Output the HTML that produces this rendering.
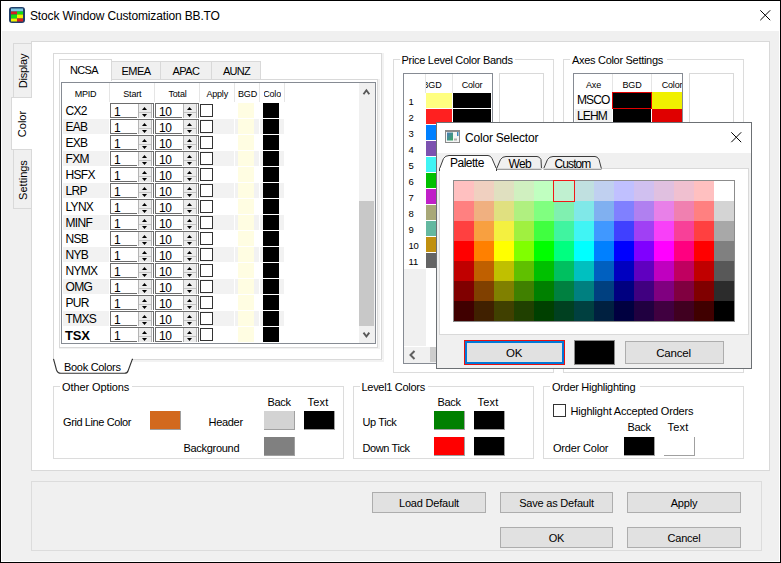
<!DOCTYPE html><html><head><meta charset="utf-8"><title>Stock Window Customization</title><style>
*{margin:0;padding:0;box-sizing:border-box}
html,body{width:781px;height:563px;overflow:hidden;background:#000}
body{position:relative;font-family:"Liberation Sans",sans-serif;color:#000}
.a{position:absolute}
.t{position:absolute;white-space:nowrap;color:#000}
</style></head><body>
<div class="a" style="left:1px;top:1px;width:779px;height:561px;background:#fff"></div>
<div class="a" style="left:2px;top:31px;width:777px;height:530px;background:#f0f0f0"></div>
<svg class="a" style="left:9px;top:7px" width="16" height="16" viewBox="0 0 16 16"><rect x="0" y="0" width="16" height="16" rx="3" fill="#22406a"/><rect x="2" y="1.5" width="12" height="3" fill="#7ec8e3"/><rect x="2" y="4.5" width="6" height="3" fill="#d42020"/><rect x="8" y="4.5" width="6" height="3" fill="#10e010"/><rect x="2" y="7.5" width="6" height="4" fill="#10e010"/><rect x="8" y="7.5" width="6" height="4" fill="#f0f000"/><rect x="2" y="11.5" width="6" height="3" fill="#f0f000"/><rect x="8" y="11.5" width="6" height="3" fill="#d42020"/></svg>
<div class="t" style="left:30px;top:8.84px;font-size:12px;line-height:14px;letter-spacing:-0.15px;">Stock Window Customization BB.TO</div>
<svg class="a" style="left:759px;top:9px" width="13" height="13" viewBox="0 0 13 13"><path d="M1.3 1.3L11.2 11.2M11.2 1.3L1.3 11.2" stroke="#000" stroke-width="1"/></svg>
<div class="a" style="left:13px;top:43px;width:19px;height:55px;background:#f0f0f0;border:1px solid #d9d9d9;border-right:none"></div>
<div class="a" style="left:13px;top:149px;width:19px;height:60px;background:#f0f0f0;border:1px solid #d9d9d9;border-right:none"></div>
<div class="a" style="left:31px;top:41px;width:739px;height:430px;background:#fff;border:1px solid #d9d9d9"></div>
<div class="a" style="left:11px;top:97px;width:21px;height:53px;background:#fff;border:1px solid #d9d9d9;border-right:none"></div>
<div class="t" style="left:-17.5px;top:64px;width:80px;height:14px;line-height:14px;text-align:center;font-size:11px;letter-spacing:-0.2px;transform:rotate(-90deg)">Display</div>
<div class="t" style="left:-18px;top:117px;width:80px;height:14px;line-height:14px;text-align:center;font-size:11px;letter-spacing:0px;transform:rotate(-90deg)">Color</div>
<div class="t" style="left:-17.5px;top:173px;width:80px;height:14px;line-height:14px;text-align:center;font-size:11px;letter-spacing:0px;transform:rotate(-90deg)">Settings</div>
<div class="a" style="left:53px;top:53px;width:331px;height:309px;background:#f2f2f2"></div>
<div class="a" style="left:53px;top:53px;width:329px;height:307px;background:#fff;border:1px solid #d9d9d9"></div>
<div class="a" style="left:111px;top:61px;width:50px;height:19px;background:#f0f0f0;border:1px solid #d9d9d9"></div>
<div class="a" style="left:160px;top:61px;width:52px;height:19px;background:#f0f0f0;border:1px solid #d9d9d9"></div>
<div class="a" style="left:211px;top:61px;width:50px;height:19px;background:#f0f0f0;border:1px solid #d9d9d9"></div>
<div class="a" style="left:59px;top:79px;width:321px;height:270px;background:#f2f2f2"></div>
<div class="a" style="left:59px;top:79px;width:319px;height:269px;background:#fff;border:1px solid #d9d9d9"></div>
<div class="a" style="left:59px;top:59px;width:53px;height:22px;background:#fff;border:1px solid #d9d9d9;border-bottom:none"></div>
<div class="t" style="left:-16.0px;width:200px;text-align:center;top:63.89px;font-size:11px;line-height:13px;letter-spacing:-0.6px;">NCSA</div>
<div class="t" style="left:36.0px;width:200px;text-align:center;top:64.69px;font-size:11px;line-height:13px;letter-spacing:-0.5px;">EMEA</div>
<div class="t" style="left:86.0px;width:200px;text-align:center;top:64.69px;font-size:11px;line-height:13px;letter-spacing:-0.5px;">APAC</div>
<div class="t" style="left:136.5px;width:200px;text-align:center;top:64.69px;font-size:11px;line-height:13px;letter-spacing:-0.7px;">AUNZ</div>
<div class="a" style="left:61px;top:82px;width:315px;height:262px;background:#fff;border:1px solid #868b93"></div>
<div class="a" style="left:109px;top:83px;width:1px;height:19px;background:#e5e5e5"></div>
<div class="a" style="left:154px;top:83px;width:1px;height:19px;background:#e5e5e5"></div>
<div class="a" style="left:199px;top:83px;width:1px;height:19px;background:#e5e5e5"></div>
<div class="a" style="left:234px;top:83px;width:1px;height:19px;background:#e5e5e5"></div>
<div class="a" style="left:259px;top:83px;width:1px;height:19px;background:#e5e5e5"></div>
<div class="a" style="left:284px;top:83px;width:1px;height:19px;background:#e5e5e5"></div>
<div class="a" style="left:62px;width:47px;top:88.58px;height:11px;overflow:hidden"><div class="t" style="left:-6.5px;width:60px;top:0;line-height:11px;font-size:9px;text-align:center;letter-spacing:-0.2px">MPID</div></div>
<div class="a" style="left:110px;width:44px;top:88.58px;height:11px;overflow:hidden"><div class="t" style="left:-7.699999999999989px;width:60px;top:0;line-height:11px;font-size:9px;text-align:center;letter-spacing:-0.2px">Start</div></div>
<div class="a" style="left:155px;width:44px;top:88.58px;height:11px;overflow:hidden"><div class="t" style="left:-7.5px;width:60px;top:0;line-height:11px;font-size:9px;text-align:center;letter-spacing:-0.2px">Total</div></div>
<div class="a" style="left:200px;width:34px;top:88.58px;height:11px;overflow:hidden"><div class="t" style="left:-12.800000000000011px;width:60px;top:0;line-height:11px;font-size:9px;text-align:center;letter-spacing:-0.2px">Apply</div></div>
<div class="a" style="left:238px;width:20px;top:88.58px;height:11px;overflow:hidden"><div class="t" style="left:-20.5px;width:60px;top:0;line-height:11px;font-size:9px;text-align:center;letter-spacing:-0.2px">BGD</div></div>
<div class="a" style="left:264px;width:17px;top:88.58px;height:11px;overflow:hidden"><div class="t" style="left:-20.5px;width:60px;top:0;line-height:11px;font-size:9px;text-align:center;letter-spacing:-0.2px">Color</div></div>
<div class="t" style="left:65.5px;top:103.84px;font-size:12px;line-height:14px;letter-spacing:-0.7px;">CX2</div>
<div class="a" style="left:110px;top:103px;width:44px;height:15px;border:1px solid #6d6d6d;border-bottom:none;background:#fff"></div>
<div class="a" style="left:110px;top:117px;width:27px;height:1px;background:#6d6d6d"></div>
<div class="a" style="left:138px;top:104px;width:14px;height:14px;background:#ececec;border-left:1px solid #b4b4b4;border-right:1px solid #b4b4b4"></div>
<div class="a" style="left:139px;top:112px;width:12px;height:1px;background:#c4c4c4"></div>
<svg class="a" style="left:142px;top:107px" width="5" height="10" viewBox="0 0 5 10"><path d="M0 3H5L2.5 0Z" fill="#000"/><path d="M0 7H5L2.5 10Z" fill="#000"/></svg>
<div class="t" style="left:114px;top:104.84px;font-size:12px;line-height:14px;letter-spacing:-0.3px;">1</div>
<div class="a" style="left:155px;top:103px;width:44px;height:15px;border:1px solid #6d6d6d;border-bottom:none;background:#fff"></div>
<div class="a" style="left:155px;top:117px;width:27px;height:1px;background:#6d6d6d"></div>
<div class="a" style="left:183px;top:104px;width:14px;height:14px;background:#ececec;border-left:1px solid #b4b4b4;border-right:1px solid #b4b4b4"></div>
<div class="a" style="left:184px;top:112px;width:12px;height:1px;background:#c4c4c4"></div>
<svg class="a" style="left:187px;top:107px" width="5" height="10" viewBox="0 0 5 10"><path d="M0 3H5L2.5 0Z" fill="#000"/><path d="M0 7H5L2.5 10Z" fill="#000"/></svg>
<div class="t" style="left:159px;top:104.84px;font-size:12px;line-height:14px;letter-spacing:-0.3px;">10</div>
<div class="a" style="left:200px;top:104px;width:13px;height:13px;background:#fff;border:1px solid #333"></div>
<div class="a" style="left:238px;top:103px;width:16px;height:15px;background:#fffde2"></div>
<div class="a" style="left:263px;top:103px;width:16px;height:15px;background:#000"></div>
<div class="a" style="left:63px;top:119px;width:221px;height:15px;background:#f2f2f2"></div>
<div class="a" style="left:109px;top:119px;width:1px;height:15px;background:#fff"></div>
<div class="a" style="left:154px;top:119px;width:1px;height:15px;background:#fff"></div>
<div class="a" style="left:199px;top:119px;width:1px;height:15px;background:#fff"></div>
<div class="a" style="left:234px;top:119px;width:1px;height:15px;background:#fff"></div>
<div class="a" style="left:259px;top:119px;width:1px;height:15px;background:#fff"></div>
<div class="t" style="left:65.5px;top:119.84px;font-size:12px;line-height:14px;letter-spacing:-0.7px;">EAB</div>
<div class="a" style="left:110px;top:119px;width:44px;height:15px;border:1px solid #6d6d6d;border-bottom:none;background:#fff"></div>
<div class="a" style="left:110px;top:133px;width:27px;height:1px;background:#6d6d6d"></div>
<div class="a" style="left:138px;top:120px;width:14px;height:14px;background:#ececec;border-left:1px solid #b4b4b4;border-right:1px solid #b4b4b4"></div>
<div class="a" style="left:139px;top:128px;width:12px;height:1px;background:#c4c4c4"></div>
<svg class="a" style="left:142px;top:123px" width="5" height="10" viewBox="0 0 5 10"><path d="M0 3H5L2.5 0Z" fill="#000"/><path d="M0 7H5L2.5 10Z" fill="#000"/></svg>
<div class="t" style="left:114px;top:120.84px;font-size:12px;line-height:14px;letter-spacing:-0.3px;">1</div>
<div class="a" style="left:155px;top:119px;width:44px;height:15px;border:1px solid #6d6d6d;border-bottom:none;background:#fff"></div>
<div class="a" style="left:155px;top:133px;width:27px;height:1px;background:#6d6d6d"></div>
<div class="a" style="left:183px;top:120px;width:14px;height:14px;background:#ececec;border-left:1px solid #b4b4b4;border-right:1px solid #b4b4b4"></div>
<div class="a" style="left:184px;top:128px;width:12px;height:1px;background:#c4c4c4"></div>
<svg class="a" style="left:187px;top:123px" width="5" height="10" viewBox="0 0 5 10"><path d="M0 3H5L2.5 0Z" fill="#000"/><path d="M0 7H5L2.5 10Z" fill="#000"/></svg>
<div class="t" style="left:159px;top:120.84px;font-size:12px;line-height:14px;letter-spacing:-0.3px;">10</div>
<div class="a" style="left:200px;top:120px;width:13px;height:13px;background:#fff;border:1px solid #333"></div>
<div class="a" style="left:238px;top:119px;width:16px;height:15px;background:#fffde2"></div>
<div class="a" style="left:263px;top:119px;width:16px;height:15px;background:#000"></div>
<div class="t" style="left:65.5px;top:135.84px;font-size:12px;line-height:14px;letter-spacing:-0.7px;">EXB</div>
<div class="a" style="left:110px;top:135px;width:44px;height:15px;border:1px solid #6d6d6d;border-bottom:none;background:#fff"></div>
<div class="a" style="left:110px;top:149px;width:27px;height:1px;background:#6d6d6d"></div>
<div class="a" style="left:138px;top:136px;width:14px;height:14px;background:#ececec;border-left:1px solid #b4b4b4;border-right:1px solid #b4b4b4"></div>
<div class="a" style="left:139px;top:144px;width:12px;height:1px;background:#c4c4c4"></div>
<svg class="a" style="left:142px;top:139px" width="5" height="10" viewBox="0 0 5 10"><path d="M0 3H5L2.5 0Z" fill="#000"/><path d="M0 7H5L2.5 10Z" fill="#000"/></svg>
<div class="t" style="left:114px;top:136.84px;font-size:12px;line-height:14px;letter-spacing:-0.3px;">1</div>
<div class="a" style="left:155px;top:135px;width:44px;height:15px;border:1px solid #6d6d6d;border-bottom:none;background:#fff"></div>
<div class="a" style="left:155px;top:149px;width:27px;height:1px;background:#6d6d6d"></div>
<div class="a" style="left:183px;top:136px;width:14px;height:14px;background:#ececec;border-left:1px solid #b4b4b4;border-right:1px solid #b4b4b4"></div>
<div class="a" style="left:184px;top:144px;width:12px;height:1px;background:#c4c4c4"></div>
<svg class="a" style="left:187px;top:139px" width="5" height="10" viewBox="0 0 5 10"><path d="M0 3H5L2.5 0Z" fill="#000"/><path d="M0 7H5L2.5 10Z" fill="#000"/></svg>
<div class="t" style="left:159px;top:136.84px;font-size:12px;line-height:14px;letter-spacing:-0.3px;">10</div>
<div class="a" style="left:200px;top:136px;width:13px;height:13px;background:#fff;border:1px solid #333"></div>
<div class="a" style="left:238px;top:135px;width:16px;height:15px;background:#fffde2"></div>
<div class="a" style="left:263px;top:135px;width:16px;height:15px;background:#000"></div>
<div class="a" style="left:63px;top:151px;width:221px;height:15px;background:#f2f2f2"></div>
<div class="a" style="left:109px;top:151px;width:1px;height:15px;background:#fff"></div>
<div class="a" style="left:154px;top:151px;width:1px;height:15px;background:#fff"></div>
<div class="a" style="left:199px;top:151px;width:1px;height:15px;background:#fff"></div>
<div class="a" style="left:234px;top:151px;width:1px;height:15px;background:#fff"></div>
<div class="a" style="left:259px;top:151px;width:1px;height:15px;background:#fff"></div>
<div class="t" style="left:65.5px;top:151.84px;font-size:12px;line-height:14px;letter-spacing:-0.7px;">FXM</div>
<div class="a" style="left:110px;top:151px;width:44px;height:15px;border:1px solid #6d6d6d;border-bottom:none;background:#fff"></div>
<div class="a" style="left:110px;top:165px;width:27px;height:1px;background:#6d6d6d"></div>
<div class="a" style="left:138px;top:152px;width:14px;height:14px;background:#ececec;border-left:1px solid #b4b4b4;border-right:1px solid #b4b4b4"></div>
<div class="a" style="left:139px;top:160px;width:12px;height:1px;background:#c4c4c4"></div>
<svg class="a" style="left:142px;top:155px" width="5" height="10" viewBox="0 0 5 10"><path d="M0 3H5L2.5 0Z" fill="#000"/><path d="M0 7H5L2.5 10Z" fill="#000"/></svg>
<div class="t" style="left:114px;top:152.84px;font-size:12px;line-height:14px;letter-spacing:-0.3px;">1</div>
<div class="a" style="left:155px;top:151px;width:44px;height:15px;border:1px solid #6d6d6d;border-bottom:none;background:#fff"></div>
<div class="a" style="left:155px;top:165px;width:27px;height:1px;background:#6d6d6d"></div>
<div class="a" style="left:183px;top:152px;width:14px;height:14px;background:#ececec;border-left:1px solid #b4b4b4;border-right:1px solid #b4b4b4"></div>
<div class="a" style="left:184px;top:160px;width:12px;height:1px;background:#c4c4c4"></div>
<svg class="a" style="left:187px;top:155px" width="5" height="10" viewBox="0 0 5 10"><path d="M0 3H5L2.5 0Z" fill="#000"/><path d="M0 7H5L2.5 10Z" fill="#000"/></svg>
<div class="t" style="left:159px;top:152.84px;font-size:12px;line-height:14px;letter-spacing:-0.3px;">10</div>
<div class="a" style="left:200px;top:152px;width:13px;height:13px;background:#fff;border:1px solid #333"></div>
<div class="a" style="left:238px;top:151px;width:16px;height:15px;background:#fffde2"></div>
<div class="a" style="left:263px;top:151px;width:16px;height:15px;background:#000"></div>
<div class="t" style="left:65.5px;top:167.84px;font-size:12px;line-height:14px;letter-spacing:-0.7px;">HSFX</div>
<div class="a" style="left:110px;top:167px;width:44px;height:15px;border:1px solid #6d6d6d;border-bottom:none;background:#fff"></div>
<div class="a" style="left:110px;top:181px;width:27px;height:1px;background:#6d6d6d"></div>
<div class="a" style="left:138px;top:168px;width:14px;height:14px;background:#ececec;border-left:1px solid #b4b4b4;border-right:1px solid #b4b4b4"></div>
<div class="a" style="left:139px;top:176px;width:12px;height:1px;background:#c4c4c4"></div>
<svg class="a" style="left:142px;top:171px" width="5" height="10" viewBox="0 0 5 10"><path d="M0 3H5L2.5 0Z" fill="#000"/><path d="M0 7H5L2.5 10Z" fill="#000"/></svg>
<div class="t" style="left:114px;top:168.84px;font-size:12px;line-height:14px;letter-spacing:-0.3px;">1</div>
<div class="a" style="left:155px;top:167px;width:44px;height:15px;border:1px solid #6d6d6d;border-bottom:none;background:#fff"></div>
<div class="a" style="left:155px;top:181px;width:27px;height:1px;background:#6d6d6d"></div>
<div class="a" style="left:183px;top:168px;width:14px;height:14px;background:#ececec;border-left:1px solid #b4b4b4;border-right:1px solid #b4b4b4"></div>
<div class="a" style="left:184px;top:176px;width:12px;height:1px;background:#c4c4c4"></div>
<svg class="a" style="left:187px;top:171px" width="5" height="10" viewBox="0 0 5 10"><path d="M0 3H5L2.5 0Z" fill="#000"/><path d="M0 7H5L2.5 10Z" fill="#000"/></svg>
<div class="t" style="left:159px;top:168.84px;font-size:12px;line-height:14px;letter-spacing:-0.3px;">10</div>
<div class="a" style="left:200px;top:168px;width:13px;height:13px;background:#fff;border:1px solid #333"></div>
<div class="a" style="left:238px;top:167px;width:16px;height:15px;background:#fffde2"></div>
<div class="a" style="left:263px;top:167px;width:16px;height:15px;background:#000"></div>
<div class="a" style="left:63px;top:183px;width:221px;height:15px;background:#f2f2f2"></div>
<div class="a" style="left:109px;top:183px;width:1px;height:15px;background:#fff"></div>
<div class="a" style="left:154px;top:183px;width:1px;height:15px;background:#fff"></div>
<div class="a" style="left:199px;top:183px;width:1px;height:15px;background:#fff"></div>
<div class="a" style="left:234px;top:183px;width:1px;height:15px;background:#fff"></div>
<div class="a" style="left:259px;top:183px;width:1px;height:15px;background:#fff"></div>
<div class="t" style="left:65.5px;top:183.84px;font-size:12px;line-height:14px;letter-spacing:-0.7px;">LRP</div>
<div class="a" style="left:110px;top:183px;width:44px;height:15px;border:1px solid #6d6d6d;border-bottom:none;background:#fff"></div>
<div class="a" style="left:110px;top:197px;width:27px;height:1px;background:#6d6d6d"></div>
<div class="a" style="left:138px;top:184px;width:14px;height:14px;background:#ececec;border-left:1px solid #b4b4b4;border-right:1px solid #b4b4b4"></div>
<div class="a" style="left:139px;top:192px;width:12px;height:1px;background:#c4c4c4"></div>
<svg class="a" style="left:142px;top:187px" width="5" height="10" viewBox="0 0 5 10"><path d="M0 3H5L2.5 0Z" fill="#000"/><path d="M0 7H5L2.5 10Z" fill="#000"/></svg>
<div class="t" style="left:114px;top:184.84px;font-size:12px;line-height:14px;letter-spacing:-0.3px;">1</div>
<div class="a" style="left:155px;top:183px;width:44px;height:15px;border:1px solid #6d6d6d;border-bottom:none;background:#fff"></div>
<div class="a" style="left:155px;top:197px;width:27px;height:1px;background:#6d6d6d"></div>
<div class="a" style="left:183px;top:184px;width:14px;height:14px;background:#ececec;border-left:1px solid #b4b4b4;border-right:1px solid #b4b4b4"></div>
<div class="a" style="left:184px;top:192px;width:12px;height:1px;background:#c4c4c4"></div>
<svg class="a" style="left:187px;top:187px" width="5" height="10" viewBox="0 0 5 10"><path d="M0 3H5L2.5 0Z" fill="#000"/><path d="M0 7H5L2.5 10Z" fill="#000"/></svg>
<div class="t" style="left:159px;top:184.84px;font-size:12px;line-height:14px;letter-spacing:-0.3px;">10</div>
<div class="a" style="left:200px;top:184px;width:13px;height:13px;background:#fff;border:1px solid #333"></div>
<div class="a" style="left:238px;top:183px;width:16px;height:15px;background:#fffde2"></div>
<div class="a" style="left:263px;top:183px;width:16px;height:15px;background:#000"></div>
<div class="t" style="left:65.5px;top:199.84px;font-size:12px;line-height:14px;letter-spacing:-0.7px;">LYNX</div>
<div class="a" style="left:110px;top:199px;width:44px;height:15px;border:1px solid #6d6d6d;border-bottom:none;background:#fff"></div>
<div class="a" style="left:110px;top:213px;width:27px;height:1px;background:#6d6d6d"></div>
<div class="a" style="left:138px;top:200px;width:14px;height:14px;background:#ececec;border-left:1px solid #b4b4b4;border-right:1px solid #b4b4b4"></div>
<div class="a" style="left:139px;top:208px;width:12px;height:1px;background:#c4c4c4"></div>
<svg class="a" style="left:142px;top:203px" width="5" height="10" viewBox="0 0 5 10"><path d="M0 3H5L2.5 0Z" fill="#000"/><path d="M0 7H5L2.5 10Z" fill="#000"/></svg>
<div class="t" style="left:114px;top:200.84px;font-size:12px;line-height:14px;letter-spacing:-0.3px;">1</div>
<div class="a" style="left:155px;top:199px;width:44px;height:15px;border:1px solid #6d6d6d;border-bottom:none;background:#fff"></div>
<div class="a" style="left:155px;top:213px;width:27px;height:1px;background:#6d6d6d"></div>
<div class="a" style="left:183px;top:200px;width:14px;height:14px;background:#ececec;border-left:1px solid #b4b4b4;border-right:1px solid #b4b4b4"></div>
<div class="a" style="left:184px;top:208px;width:12px;height:1px;background:#c4c4c4"></div>
<svg class="a" style="left:187px;top:203px" width="5" height="10" viewBox="0 0 5 10"><path d="M0 3H5L2.5 0Z" fill="#000"/><path d="M0 7H5L2.5 10Z" fill="#000"/></svg>
<div class="t" style="left:159px;top:200.84px;font-size:12px;line-height:14px;letter-spacing:-0.3px;">10</div>
<div class="a" style="left:200px;top:200px;width:13px;height:13px;background:#fff;border:1px solid #333"></div>
<div class="a" style="left:238px;top:199px;width:16px;height:15px;background:#fffde2"></div>
<div class="a" style="left:263px;top:199px;width:16px;height:15px;background:#000"></div>
<div class="a" style="left:63px;top:215px;width:221px;height:15px;background:#f2f2f2"></div>
<div class="a" style="left:109px;top:215px;width:1px;height:15px;background:#fff"></div>
<div class="a" style="left:154px;top:215px;width:1px;height:15px;background:#fff"></div>
<div class="a" style="left:199px;top:215px;width:1px;height:15px;background:#fff"></div>
<div class="a" style="left:234px;top:215px;width:1px;height:15px;background:#fff"></div>
<div class="a" style="left:259px;top:215px;width:1px;height:15px;background:#fff"></div>
<div class="t" style="left:65.5px;top:215.84px;font-size:12px;line-height:14px;letter-spacing:-0.7px;">MINF</div>
<div class="a" style="left:110px;top:215px;width:44px;height:15px;border:1px solid #6d6d6d;border-bottom:none;background:#fff"></div>
<div class="a" style="left:110px;top:229px;width:27px;height:1px;background:#6d6d6d"></div>
<div class="a" style="left:138px;top:216px;width:14px;height:14px;background:#ececec;border-left:1px solid #b4b4b4;border-right:1px solid #b4b4b4"></div>
<div class="a" style="left:139px;top:224px;width:12px;height:1px;background:#c4c4c4"></div>
<svg class="a" style="left:142px;top:219px" width="5" height="10" viewBox="0 0 5 10"><path d="M0 3H5L2.5 0Z" fill="#000"/><path d="M0 7H5L2.5 10Z" fill="#000"/></svg>
<div class="t" style="left:114px;top:216.84px;font-size:12px;line-height:14px;letter-spacing:-0.3px;">1</div>
<div class="a" style="left:155px;top:215px;width:44px;height:15px;border:1px solid #6d6d6d;border-bottom:none;background:#fff"></div>
<div class="a" style="left:155px;top:229px;width:27px;height:1px;background:#6d6d6d"></div>
<div class="a" style="left:183px;top:216px;width:14px;height:14px;background:#ececec;border-left:1px solid #b4b4b4;border-right:1px solid #b4b4b4"></div>
<div class="a" style="left:184px;top:224px;width:12px;height:1px;background:#c4c4c4"></div>
<svg class="a" style="left:187px;top:219px" width="5" height="10" viewBox="0 0 5 10"><path d="M0 3H5L2.5 0Z" fill="#000"/><path d="M0 7H5L2.5 10Z" fill="#000"/></svg>
<div class="t" style="left:159px;top:216.84px;font-size:12px;line-height:14px;letter-spacing:-0.3px;">10</div>
<div class="a" style="left:200px;top:216px;width:13px;height:13px;background:#fff;border:1px solid #333"></div>
<div class="a" style="left:238px;top:215px;width:16px;height:15px;background:#fffde2"></div>
<div class="a" style="left:263px;top:215px;width:16px;height:15px;background:#000"></div>
<div class="t" style="left:65.5px;top:231.84px;font-size:12px;line-height:14px;letter-spacing:-0.7px;">NSB</div>
<div class="a" style="left:110px;top:231px;width:44px;height:15px;border:1px solid #6d6d6d;border-bottom:none;background:#fff"></div>
<div class="a" style="left:110px;top:245px;width:27px;height:1px;background:#6d6d6d"></div>
<div class="a" style="left:138px;top:232px;width:14px;height:14px;background:#ececec;border-left:1px solid #b4b4b4;border-right:1px solid #b4b4b4"></div>
<div class="a" style="left:139px;top:240px;width:12px;height:1px;background:#c4c4c4"></div>
<svg class="a" style="left:142px;top:235px" width="5" height="10" viewBox="0 0 5 10"><path d="M0 3H5L2.5 0Z" fill="#000"/><path d="M0 7H5L2.5 10Z" fill="#000"/></svg>
<div class="t" style="left:114px;top:232.84px;font-size:12px;line-height:14px;letter-spacing:-0.3px;">1</div>
<div class="a" style="left:155px;top:231px;width:44px;height:15px;border:1px solid #6d6d6d;border-bottom:none;background:#fff"></div>
<div class="a" style="left:155px;top:245px;width:27px;height:1px;background:#6d6d6d"></div>
<div class="a" style="left:183px;top:232px;width:14px;height:14px;background:#ececec;border-left:1px solid #b4b4b4;border-right:1px solid #b4b4b4"></div>
<div class="a" style="left:184px;top:240px;width:12px;height:1px;background:#c4c4c4"></div>
<svg class="a" style="left:187px;top:235px" width="5" height="10" viewBox="0 0 5 10"><path d="M0 3H5L2.5 0Z" fill="#000"/><path d="M0 7H5L2.5 10Z" fill="#000"/></svg>
<div class="t" style="left:159px;top:232.84px;font-size:12px;line-height:14px;letter-spacing:-0.3px;">10</div>
<div class="a" style="left:200px;top:232px;width:13px;height:13px;background:#fff;border:1px solid #333"></div>
<div class="a" style="left:238px;top:231px;width:16px;height:15px;background:#fffde2"></div>
<div class="a" style="left:263px;top:231px;width:16px;height:15px;background:#000"></div>
<div class="a" style="left:63px;top:247px;width:221px;height:15px;background:#f2f2f2"></div>
<div class="a" style="left:109px;top:247px;width:1px;height:15px;background:#fff"></div>
<div class="a" style="left:154px;top:247px;width:1px;height:15px;background:#fff"></div>
<div class="a" style="left:199px;top:247px;width:1px;height:15px;background:#fff"></div>
<div class="a" style="left:234px;top:247px;width:1px;height:15px;background:#fff"></div>
<div class="a" style="left:259px;top:247px;width:1px;height:15px;background:#fff"></div>
<div class="t" style="left:65.5px;top:247.84px;font-size:12px;line-height:14px;letter-spacing:-0.7px;">NYB</div>
<div class="a" style="left:110px;top:247px;width:44px;height:15px;border:1px solid #6d6d6d;border-bottom:none;background:#fff"></div>
<div class="a" style="left:110px;top:261px;width:27px;height:1px;background:#6d6d6d"></div>
<div class="a" style="left:138px;top:248px;width:14px;height:14px;background:#ececec;border-left:1px solid #b4b4b4;border-right:1px solid #b4b4b4"></div>
<div class="a" style="left:139px;top:256px;width:12px;height:1px;background:#c4c4c4"></div>
<svg class="a" style="left:142px;top:251px" width="5" height="10" viewBox="0 0 5 10"><path d="M0 3H5L2.5 0Z" fill="#000"/><path d="M0 7H5L2.5 10Z" fill="#000"/></svg>
<div class="t" style="left:114px;top:248.84px;font-size:12px;line-height:14px;letter-spacing:-0.3px;">1</div>
<div class="a" style="left:155px;top:247px;width:44px;height:15px;border:1px solid #6d6d6d;border-bottom:none;background:#fff"></div>
<div class="a" style="left:155px;top:261px;width:27px;height:1px;background:#6d6d6d"></div>
<div class="a" style="left:183px;top:248px;width:14px;height:14px;background:#ececec;border-left:1px solid #b4b4b4;border-right:1px solid #b4b4b4"></div>
<div class="a" style="left:184px;top:256px;width:12px;height:1px;background:#c4c4c4"></div>
<svg class="a" style="left:187px;top:251px" width="5" height="10" viewBox="0 0 5 10"><path d="M0 3H5L2.5 0Z" fill="#000"/><path d="M0 7H5L2.5 10Z" fill="#000"/></svg>
<div class="t" style="left:159px;top:248.84px;font-size:12px;line-height:14px;letter-spacing:-0.3px;">10</div>
<div class="a" style="left:200px;top:248px;width:13px;height:13px;background:#fff;border:1px solid #333"></div>
<div class="a" style="left:238px;top:247px;width:16px;height:15px;background:#fffde2"></div>
<div class="a" style="left:263px;top:247px;width:16px;height:15px;background:#000"></div>
<div class="t" style="left:65.5px;top:263.84px;font-size:12px;line-height:14px;letter-spacing:-0.7px;">NYMX</div>
<div class="a" style="left:110px;top:263px;width:44px;height:15px;border:1px solid #6d6d6d;border-bottom:none;background:#fff"></div>
<div class="a" style="left:110px;top:277px;width:27px;height:1px;background:#6d6d6d"></div>
<div class="a" style="left:138px;top:264px;width:14px;height:14px;background:#ececec;border-left:1px solid #b4b4b4;border-right:1px solid #b4b4b4"></div>
<div class="a" style="left:139px;top:272px;width:12px;height:1px;background:#c4c4c4"></div>
<svg class="a" style="left:142px;top:267px" width="5" height="10" viewBox="0 0 5 10"><path d="M0 3H5L2.5 0Z" fill="#000"/><path d="M0 7H5L2.5 10Z" fill="#000"/></svg>
<div class="t" style="left:114px;top:264.84px;font-size:12px;line-height:14px;letter-spacing:-0.3px;">1</div>
<div class="a" style="left:155px;top:263px;width:44px;height:15px;border:1px solid #6d6d6d;border-bottom:none;background:#fff"></div>
<div class="a" style="left:155px;top:277px;width:27px;height:1px;background:#6d6d6d"></div>
<div class="a" style="left:183px;top:264px;width:14px;height:14px;background:#ececec;border-left:1px solid #b4b4b4;border-right:1px solid #b4b4b4"></div>
<div class="a" style="left:184px;top:272px;width:12px;height:1px;background:#c4c4c4"></div>
<svg class="a" style="left:187px;top:267px" width="5" height="10" viewBox="0 0 5 10"><path d="M0 3H5L2.5 0Z" fill="#000"/><path d="M0 7H5L2.5 10Z" fill="#000"/></svg>
<div class="t" style="left:159px;top:264.84px;font-size:12px;line-height:14px;letter-spacing:-0.3px;">10</div>
<div class="a" style="left:200px;top:264px;width:13px;height:13px;background:#fff;border:1px solid #333"></div>
<div class="a" style="left:238px;top:263px;width:16px;height:15px;background:#fffde2"></div>
<div class="a" style="left:263px;top:263px;width:16px;height:15px;background:#000"></div>
<div class="a" style="left:63px;top:279px;width:221px;height:15px;background:#f2f2f2"></div>
<div class="a" style="left:109px;top:279px;width:1px;height:15px;background:#fff"></div>
<div class="a" style="left:154px;top:279px;width:1px;height:15px;background:#fff"></div>
<div class="a" style="left:199px;top:279px;width:1px;height:15px;background:#fff"></div>
<div class="a" style="left:234px;top:279px;width:1px;height:15px;background:#fff"></div>
<div class="a" style="left:259px;top:279px;width:1px;height:15px;background:#fff"></div>
<div class="t" style="left:65.5px;top:279.84px;font-size:12px;line-height:14px;letter-spacing:-0.7px;">OMG</div>
<div class="a" style="left:110px;top:279px;width:44px;height:15px;border:1px solid #6d6d6d;border-bottom:none;background:#fff"></div>
<div class="a" style="left:110px;top:293px;width:27px;height:1px;background:#6d6d6d"></div>
<div class="a" style="left:138px;top:280px;width:14px;height:14px;background:#ececec;border-left:1px solid #b4b4b4;border-right:1px solid #b4b4b4"></div>
<div class="a" style="left:139px;top:288px;width:12px;height:1px;background:#c4c4c4"></div>
<svg class="a" style="left:142px;top:283px" width="5" height="10" viewBox="0 0 5 10"><path d="M0 3H5L2.5 0Z" fill="#000"/><path d="M0 7H5L2.5 10Z" fill="#000"/></svg>
<div class="t" style="left:114px;top:280.84px;font-size:12px;line-height:14px;letter-spacing:-0.3px;">1</div>
<div class="a" style="left:155px;top:279px;width:44px;height:15px;border:1px solid #6d6d6d;border-bottom:none;background:#fff"></div>
<div class="a" style="left:155px;top:293px;width:27px;height:1px;background:#6d6d6d"></div>
<div class="a" style="left:183px;top:280px;width:14px;height:14px;background:#ececec;border-left:1px solid #b4b4b4;border-right:1px solid #b4b4b4"></div>
<div class="a" style="left:184px;top:288px;width:12px;height:1px;background:#c4c4c4"></div>
<svg class="a" style="left:187px;top:283px" width="5" height="10" viewBox="0 0 5 10"><path d="M0 3H5L2.5 0Z" fill="#000"/><path d="M0 7H5L2.5 10Z" fill="#000"/></svg>
<div class="t" style="left:159px;top:280.84px;font-size:12px;line-height:14px;letter-spacing:-0.3px;">10</div>
<div class="a" style="left:200px;top:280px;width:13px;height:13px;background:#fff;border:1px solid #333"></div>
<div class="a" style="left:238px;top:279px;width:16px;height:15px;background:#fffde2"></div>
<div class="a" style="left:263px;top:279px;width:16px;height:15px;background:#000"></div>
<div class="t" style="left:65.5px;top:295.84px;font-size:12px;line-height:14px;letter-spacing:-0.7px;">PUR</div>
<div class="a" style="left:110px;top:295px;width:44px;height:15px;border:1px solid #6d6d6d;border-bottom:none;background:#fff"></div>
<div class="a" style="left:110px;top:309px;width:27px;height:1px;background:#6d6d6d"></div>
<div class="a" style="left:138px;top:296px;width:14px;height:14px;background:#ececec;border-left:1px solid #b4b4b4;border-right:1px solid #b4b4b4"></div>
<div class="a" style="left:139px;top:304px;width:12px;height:1px;background:#c4c4c4"></div>
<svg class="a" style="left:142px;top:299px" width="5" height="10" viewBox="0 0 5 10"><path d="M0 3H5L2.5 0Z" fill="#000"/><path d="M0 7H5L2.5 10Z" fill="#000"/></svg>
<div class="t" style="left:114px;top:296.84px;font-size:12px;line-height:14px;letter-spacing:-0.3px;">1</div>
<div class="a" style="left:155px;top:295px;width:44px;height:15px;border:1px solid #6d6d6d;border-bottom:none;background:#fff"></div>
<div class="a" style="left:155px;top:309px;width:27px;height:1px;background:#6d6d6d"></div>
<div class="a" style="left:183px;top:296px;width:14px;height:14px;background:#ececec;border-left:1px solid #b4b4b4;border-right:1px solid #b4b4b4"></div>
<div class="a" style="left:184px;top:304px;width:12px;height:1px;background:#c4c4c4"></div>
<svg class="a" style="left:187px;top:299px" width="5" height="10" viewBox="0 0 5 10"><path d="M0 3H5L2.5 0Z" fill="#000"/><path d="M0 7H5L2.5 10Z" fill="#000"/></svg>
<div class="t" style="left:159px;top:296.84px;font-size:12px;line-height:14px;letter-spacing:-0.3px;">10</div>
<div class="a" style="left:200px;top:296px;width:13px;height:13px;background:#fff;border:1px solid #333"></div>
<div class="a" style="left:238px;top:295px;width:16px;height:15px;background:#fffde2"></div>
<div class="a" style="left:263px;top:295px;width:16px;height:15px;background:#000"></div>
<div class="a" style="left:63px;top:311px;width:221px;height:15px;background:#f2f2f2"></div>
<div class="a" style="left:109px;top:311px;width:1px;height:15px;background:#fff"></div>
<div class="a" style="left:154px;top:311px;width:1px;height:15px;background:#fff"></div>
<div class="a" style="left:199px;top:311px;width:1px;height:15px;background:#fff"></div>
<div class="a" style="left:234px;top:311px;width:1px;height:15px;background:#fff"></div>
<div class="a" style="left:259px;top:311px;width:1px;height:15px;background:#fff"></div>
<div class="t" style="left:65.5px;top:311.84px;font-size:12px;line-height:14px;letter-spacing:-0.7px;">TMXS</div>
<div class="a" style="left:110px;top:311px;width:44px;height:15px;border:1px solid #6d6d6d;border-bottom:none;background:#fff"></div>
<div class="a" style="left:110px;top:325px;width:27px;height:1px;background:#6d6d6d"></div>
<div class="a" style="left:138px;top:312px;width:14px;height:14px;background:#ececec;border-left:1px solid #b4b4b4;border-right:1px solid #b4b4b4"></div>
<div class="a" style="left:139px;top:320px;width:12px;height:1px;background:#c4c4c4"></div>
<svg class="a" style="left:142px;top:315px" width="5" height="10" viewBox="0 0 5 10"><path d="M0 3H5L2.5 0Z" fill="#000"/><path d="M0 7H5L2.5 10Z" fill="#000"/></svg>
<div class="t" style="left:114px;top:312.84px;font-size:12px;line-height:14px;letter-spacing:-0.3px;">1</div>
<div class="a" style="left:155px;top:311px;width:44px;height:15px;border:1px solid #6d6d6d;border-bottom:none;background:#fff"></div>
<div class="a" style="left:155px;top:325px;width:27px;height:1px;background:#6d6d6d"></div>
<div class="a" style="left:183px;top:312px;width:14px;height:14px;background:#ececec;border-left:1px solid #b4b4b4;border-right:1px solid #b4b4b4"></div>
<div class="a" style="left:184px;top:320px;width:12px;height:1px;background:#c4c4c4"></div>
<svg class="a" style="left:187px;top:315px" width="5" height="10" viewBox="0 0 5 10"><path d="M0 3H5L2.5 0Z" fill="#000"/><path d="M0 7H5L2.5 10Z" fill="#000"/></svg>
<div class="t" style="left:159px;top:312.84px;font-size:12px;line-height:14px;letter-spacing:-0.3px;">10</div>
<div class="a" style="left:200px;top:312px;width:13px;height:13px;background:#fff;border:1px solid #333"></div>
<div class="a" style="left:238px;top:311px;width:16px;height:15px;background:#fffde2"></div>
<div class="a" style="left:263px;top:311px;width:16px;height:15px;background:#000"></div>
<div class="t" style="left:65px;top:327.50px;font-size:13px;line-height:15px;letter-spacing:-0.2px;font-weight:bold">TSX</div>
<div class="a" style="left:110px;top:327px;width:44px;height:15px;border:1px solid #6d6d6d;border-bottom:none;background:#fff"></div>
<div class="a" style="left:110px;top:341px;width:27px;height:1px;background:#6d6d6d"></div>
<div class="a" style="left:138px;top:328px;width:14px;height:14px;background:#ececec;border-left:1px solid #b4b4b4;border-right:1px solid #b4b4b4"></div>
<div class="a" style="left:139px;top:336px;width:12px;height:1px;background:#c4c4c4"></div>
<svg class="a" style="left:142px;top:331px" width="5" height="10" viewBox="0 0 5 10"><path d="M0 3H5L2.5 0Z" fill="#000"/><path d="M0 7H5L2.5 10Z" fill="#000"/></svg>
<div class="t" style="left:114px;top:328.84px;font-size:12px;line-height:14px;letter-spacing:-0.3px;">1</div>
<div class="a" style="left:155px;top:327px;width:44px;height:15px;border:1px solid #6d6d6d;border-bottom:none;background:#fff"></div>
<div class="a" style="left:155px;top:341px;width:27px;height:1px;background:#6d6d6d"></div>
<div class="a" style="left:183px;top:328px;width:14px;height:14px;background:#ececec;border-left:1px solid #b4b4b4;border-right:1px solid #b4b4b4"></div>
<div class="a" style="left:184px;top:336px;width:12px;height:1px;background:#c4c4c4"></div>
<svg class="a" style="left:187px;top:331px" width="5" height="10" viewBox="0 0 5 10"><path d="M0 3H5L2.5 0Z" fill="#000"/><path d="M0 7H5L2.5 10Z" fill="#000"/></svg>
<div class="t" style="left:159px;top:328.84px;font-size:12px;line-height:14px;letter-spacing:-0.3px;">10</div>
<div class="a" style="left:200px;top:328px;width:13px;height:13px;background:#fff;border:1px solid #333"></div>
<div class="a" style="left:238px;top:327px;width:16px;height:15px;background:#fffde2"></div>
<div class="a" style="left:263px;top:327px;width:16px;height:15px;background:#000"></div>
<div class="a" style="left:359px;top:83px;width:16px;height:260px;background:#f0f0f0"></div>
<div class="a" style="left:359px;top:201px;width:15px;height:125px;background:#c8c8c8"></div>
<svg class="a" style="left:362px;top:88px" width="10" height="8" viewBox="0 0 10 8"><path d="M1.5 6.2L4.4 2.3L7.3 6.2" stroke="#585858" stroke-width="1.9" fill="none"/></svg>
<svg class="a" style="left:362px;top:330px" width="10" height="9" viewBox="0 0 10 9"><path d="M1.5 2.6L4.4 6.5L7.3 2.6" stroke="#585858" stroke-width="1.9" fill="none"/></svg>
<svg class="a" style="left:50px;top:356px" width="340" height="22" viewBox="0 0 340 22"><path d="M4 3.5H333" stroke="#fff" stroke-width="1"/><path d="M4 4.5H334" stroke="#fff" stroke-width="1"/><path d="M82.5 3.5H332" stroke="#d9d9d9" stroke-width="1"/><path d="M82.5 4.5H334" stroke="#f2f2f2" stroke-width="1"/><path d="M3.5 2.8 L6.5 14 Q7.6 17.3 11 17.3 H74.5 Q77.4 17.3 78.2 14.5 L82.3 3.4 H83" stroke="#333" stroke-width="1.1" fill="#fff"/></svg>
<div class="t" style="left:64px;top:360.69px;font-size:11px;line-height:13px;letter-spacing:-0.3px;">Book Colors</div>
<div class="a" style="left:393px;top:59px;width:161px;height:314px;border:1px solid #dcdcdc"></div>
<div class="a" style="left:399.5px;top:56px;width:115px;height:6px;background:#fff"></div>
<div class="t" style="left:401.5px;top:53.69px;font-size:11px;line-height:13px;letter-spacing:-0.3px;">Price Level Color Bands</div>
<div class="a" style="left:403px;top:73px;width:90px;height:291px;background:#fff;border:1px solid #868b93"></div>
<div class="a" style="left:499px;top:73px;width:45px;height:291px;border:1px solid #d9d9d9"></div>
<div class="a" style="left:425px;top:74px;width:1px;height:19px;background:#e5e5e5"></div>
<div class="a" style="left:452px;top:74px;width:1px;height:19px;background:#e5e5e5"></div>
<div class="a" style="left:426px;width:26px;top:80.18px;height:11px;overflow:hidden"><div class="t" style="left:-24px;width:60px;top:0;line-height:11px;font-size:9px;text-align:center;letter-spacing:-0.2px">BGD</div></div>
<div class="a" style="left:453px;width:38px;top:80.18px;height:11px;overflow:hidden"><div class="t" style="left:-11px;width:60px;top:0;line-height:11px;font-size:9px;text-align:center;letter-spacing:-0.2px">Color</div></div>
<div class="a" style="left:426px;top:93px;width:26px;height:15px;background:#ffff80"></div>
<div class="a" style="left:453px;top:93px;width:38px;height:15px;background:#000"></div>
<div class="t" style="left:408.5px;top:95.71px;font-size:9.5px;line-height:11px;letter-spacing:-0.2px;">1</div>
<div class="a" style="left:426px;top:109px;width:26px;height:15px;background:#ff2020"></div>
<div class="a" style="left:453px;top:109px;width:38px;height:15px;background:#000"></div>
<div class="t" style="left:408.5px;top:111.71px;font-size:9.5px;line-height:11px;letter-spacing:-0.2px;">2</div>
<div class="a" style="left:426px;top:125px;width:26px;height:15px;background:#0080ff"></div>
<div class="a" style="left:453px;top:125px;width:38px;height:15px;background:#000"></div>
<div class="t" style="left:408.5px;top:127.71px;font-size:9.5px;line-height:11px;letter-spacing:-0.2px;">3</div>
<div class="a" style="left:426px;top:141px;width:26px;height:15px;background:#7c52b0"></div>
<div class="a" style="left:453px;top:141px;width:38px;height:15px;background:#000"></div>
<div class="t" style="left:408.5px;top:143.71px;font-size:9.5px;line-height:11px;letter-spacing:-0.2px;">4</div>
<div class="a" style="left:426px;top:157px;width:26px;height:15px;background:#40f4f4"></div>
<div class="a" style="left:453px;top:157px;width:38px;height:15px;background:#000"></div>
<div class="t" style="left:408.5px;top:159.71px;font-size:9.5px;line-height:11px;letter-spacing:-0.2px;">5</div>
<div class="a" style="left:426px;top:173px;width:26px;height:15px;background:#00c000"></div>
<div class="a" style="left:453px;top:173px;width:38px;height:15px;background:#000"></div>
<div class="t" style="left:408.5px;top:175.71px;font-size:9.5px;line-height:11px;letter-spacing:-0.2px;">6</div>
<div class="a" style="left:426px;top:189px;width:26px;height:15px;background:#c020c8"></div>
<div class="a" style="left:453px;top:189px;width:38px;height:15px;background:#000"></div>
<div class="t" style="left:408.5px;top:191.71px;font-size:9.5px;line-height:11px;letter-spacing:-0.2px;">7</div>
<div class="a" style="left:426px;top:205px;width:26px;height:15px;background:#a8a878"></div>
<div class="a" style="left:453px;top:205px;width:38px;height:15px;background:#000"></div>
<div class="t" style="left:408.5px;top:207.71px;font-size:9.5px;line-height:11px;letter-spacing:-0.2px;">8</div>
<div class="a" style="left:426px;top:221px;width:26px;height:15px;background:#64b8a0"></div>
<div class="a" style="left:453px;top:221px;width:38px;height:15px;background:#000"></div>
<div class="t" style="left:408.5px;top:223.71px;font-size:9.5px;line-height:11px;letter-spacing:-0.2px;">9</div>
<div class="a" style="left:426px;top:237px;width:26px;height:15px;background:#c09010"></div>
<div class="a" style="left:453px;top:237px;width:38px;height:15px;background:#000"></div>
<div class="t" style="left:408.5px;top:239.71px;font-size:9.5px;line-height:11px;letter-spacing:-0.2px;">10</div>
<div class="a" style="left:426px;top:253px;width:26px;height:15px;background:#646464"></div>
<div class="a" style="left:453px;top:253px;width:38px;height:15px;background:#000"></div>
<div class="t" style="left:408.5px;top:255.71px;font-size:9.5px;line-height:11px;letter-spacing:-0.2px;">11</div>
<div class="a" style="left:404px;top:269px;width:22px;height:77px;background:#f0f0f0"></div>
<div class="a" style="left:404px;top:347px;width:88px;height:16px;background:#f0f0f0"></div>
<div class="a" style="left:430px;top:347px;width:40px;height:15px;background:#cdcdcd"></div>
<svg class="a" style="left:408px;top:350px" width="9" height="10" viewBox="0 0 9 10"><path d="M6.5 1L2.5 5L6.5 9" stroke="#606060" stroke-width="2" fill="none"/></svg>
<div class="a" style="left:563px;top:59px;width:181px;height:314px;border:1px solid #dcdcdc"></div>
<div class="a" style="left:570px;top:56px;width:97px;height:6px;background:#fff"></div>
<div class="t" style="left:572px;top:53.69px;font-size:11px;line-height:13px;letter-spacing:-0.3px;">Axes Color Settings</div>
<div class="a" style="left:573px;top:73px;width:110px;height:291px;background:#fff;border:1px solid #868b93"></div>
<div class="a" style="left:689px;top:73px;width:45px;height:291px;border:1px solid #d9d9d9"></div>
<div class="a" style="left:612px;top:74px;width:1px;height:18px;background:#e5e5e5"></div>
<div class="a" style="left:651px;top:74px;width:1px;height:18px;background:#e5e5e5"></div>
<div class="a" style="left:574px;width:38px;top:80.18px;height:11px;overflow:hidden"><div class="t" style="left:-10.5px;width:60px;top:0;line-height:11px;font-size:9px;text-align:center;letter-spacing:-0.2px">Axe</div></div>
<div class="a" style="left:613px;width:38px;top:80.18px;height:11px;overflow:hidden"><div class="t" style="left:-11px;width:60px;top:0;line-height:11px;font-size:9px;text-align:center;letter-spacing:-0.2px">BGD</div></div>
<div class="a" style="left:652px;width:30px;top:80.18px;height:11px;overflow:hidden"><div class="t" style="left:-10px;width:60px;top:0;line-height:11px;font-size:9px;text-align:center;letter-spacing:-0.2px">Color</div></div>
<div class="t" style="left:577px;top:93.34px;font-size:12px;line-height:14px;letter-spacing:-0.9px;">MSCO</div>
<div class="a" style="left:575px;top:109px;width:37px;height:16px;background:#f2f2f2"></div>
<div class="t" style="left:577px;top:109.34px;font-size:12px;line-height:14px;letter-spacing:-0.9px;">LEHM</div>
<div class="a" style="left:612px;top:92px;width:40px;height:17px;background:#000;border:1px solid #e00000"></div>
<div class="a" style="left:652px;top:92px;width:30px;height:17px;background:#f0f000"></div>
<div class="a" style="left:613px;top:109px;width:38px;height:16px;background:#000"></div>
<div class="a" style="left:652px;top:109px;width:30px;height:16px;background:#e00000"></div>
<div class="a" style="left:53px;top:386px;width:291px;height:73px;border:1px solid #dcdcdc"></div>
<div class="a" style="left:60px;top:383px;width:72px;height:6px;background:#fff"></div>
<div class="t" style="left:62px;top:380.69px;font-size:11px;line-height:13px;letter-spacing:-0.1px;">Other Options</div>
<div class="t" style="left:63px;top:415.69px;font-size:11px;line-height:13px;letter-spacing:-0.4px;">Grid Line Color</div>
<div class="a" style="left:150px;top:411px;width:31px;height:19px;background:#d2691e;border-right:1px solid #a0a0a0;border-bottom:1px solid #a0a0a0"></div>
<div class="t" style="left:267.5px;top:395.69px;font-size:11px;line-height:13px;letter-spacing:-0.3px;">Back</div>
<div class="t" style="left:307.5px;top:395.69px;font-size:11px;line-height:13px;letter-spacing:0.2px;">Text</div>
<div class="t" style="left:208.5px;top:416.19px;font-size:11px;line-height:13px;letter-spacing:-0.3px;">Header</div>
<div class="a" style="left:264px;top:411px;width:31px;height:19px;background:#d3d3d3;border-right:1px solid #a0a0a0;border-bottom:1px solid #a0a0a0"></div>
<div class="a" style="left:304px;top:411px;width:31px;height:19px;background:#000;border-right:1px solid #a0a0a0;border-bottom:1px solid #a0a0a0"></div>
<div class="t" style="left:183.5px;top:441.69px;font-size:11px;line-height:13px;letter-spacing:-0.3px;">Background</div>
<div class="a" style="left:264px;top:437px;width:31px;height:19px;background:#808080;border-right:1px solid #a0a0a0;border-bottom:1px solid #a0a0a0"></div>
<div class="a" style="left:353px;top:386px;width:181px;height:73px;border:1px solid #dcdcdc"></div>
<div class="a" style="left:359.5px;top:383px;width:68px;height:6px;background:#fff"></div>
<div class="t" style="left:361.5px;top:380.69px;font-size:11px;line-height:13px;letter-spacing:-0.3px;">Level1 Colors</div>
<div class="t" style="left:437.5px;top:395.69px;font-size:11px;line-height:13px;letter-spacing:-0.3px;">Back</div>
<div class="t" style="left:477.5px;top:395.69px;font-size:11px;line-height:13px;letter-spacing:0.2px;">Text</div>
<div class="t" style="left:362.5px;top:416.19px;font-size:11px;line-height:13px;letter-spacing:-0.4px;">Up Tick</div>
<div class="t" style="left:362.5px;top:441.69px;font-size:11px;line-height:13px;letter-spacing:-0.4px;">Down Tick</div>
<div class="a" style="left:434px;top:411px;width:31px;height:19px;background:#008000;border-right:1px solid #a0a0a0;border-bottom:1px solid #a0a0a0"></div>
<div class="a" style="left:474px;top:411px;width:31px;height:19px;background:#000;border-right:1px solid #a0a0a0;border-bottom:1px solid #a0a0a0"></div>
<div class="a" style="left:434px;top:437px;width:31px;height:19px;background:#ff0000;border-right:1px solid #a0a0a0;border-bottom:1px solid #a0a0a0"></div>
<div class="a" style="left:474px;top:437px;width:31px;height:19px;background:#000;border-right:1px solid #a0a0a0;border-bottom:1px solid #a0a0a0"></div>
<div class="a" style="left:543px;top:386px;width:201px;height:73px;border:1px solid #dcdcdc"></div>
<div class="a" style="left:550px;top:383px;width:90px;height:6px;background:#fff"></div>
<div class="t" style="left:552px;top:380.69px;font-size:11px;line-height:13px;letter-spacing:-0.3px;">Order Highlighting</div>
<div class="a" style="left:553px;top:404px;width:13px;height:13px;background:#fff;border:1px solid #333"></div>
<div class="t" style="left:570.5px;top:405.19px;font-size:11px;line-height:13px;letter-spacing:-0.2px;">Highlight Accepted Orders</div>
<div class="t" style="left:627.5px;top:421.19px;font-size:11px;line-height:13px;letter-spacing:-0.3px;">Back</div>
<div class="t" style="left:667.5px;top:421.19px;font-size:11px;line-height:13px;letter-spacing:0.2px;">Text</div>
<div class="t" style="left:553px;top:441.69px;font-size:11px;line-height:13px;letter-spacing:-0.2px;">Order Color</div>
<div class="a" style="left:624px;top:437px;width:31px;height:19px;background:#000;border-right:1px solid #a0a0a0;border-bottom:1px solid #a0a0a0"></div>
<div class="a" style="left:664px;top:437px;width:31px;height:19px;background:#fff;border-right:1px solid #a0a0a0;border-bottom:1px solid #a0a0a0"></div>
<div class="a" style="left:31px;top:481px;width:731px;height:70px;border:1px solid #dcdcdc"></div>
<div class="a" style="left:372px;top:492px;width:114px;height:21px;background:#e1e1e1;border:1px solid #adadad"></div>
<div class="t" style="left:329.0px;width:200px;text-align:center;top:496.69px;font-size:11px;line-height:13px;letter-spacing:-0.2px;">Load Default</div>
<div class="a" style="left:500px;top:492px;width:113px;height:21px;background:#e1e1e1;border:1px solid #adadad"></div>
<div class="t" style="left:456.5px;width:200px;text-align:center;top:496.69px;font-size:11px;line-height:13px;letter-spacing:-0.2px;">Save as Default</div>
<div class="a" style="left:627px;top:492px;width:114px;height:21px;background:#e1e1e1;border:1px solid #adadad"></div>
<div class="t" style="left:584.0px;width:200px;text-align:center;top:496.69px;font-size:11px;line-height:13px;letter-spacing:-0.2px;">Apply</div>
<div class="a" style="left:500px;top:527px;width:113px;height:21px;background:#e1e1e1;border:1px solid #adadad"></div>
<div class="t" style="left:456.5px;width:200px;text-align:center;top:531.69px;font-size:11px;line-height:13px;letter-spacing:-0.2px;">OK</div>
<div class="a" style="left:627px;top:527px;width:114px;height:21px;background:#e1e1e1;border:1px solid #adadad"></div>
<div class="t" style="left:584.0px;width:200px;text-align:center;top:531.69px;font-size:11px;line-height:13px;letter-spacing:-0.2px;">Cancel</div>
<div class="a" style="left:436px;top:122px;width:316px;height:247px;background:#f0f0f0;border:1px solid #6c7074"></div>
<div class="a" style="left:437px;top:123px;width:314px;height:30px;background:#fff"></div>
<svg class="a" style="left:445px;top:130px" width="15" height="13" viewBox="0 0 15 13"><rect x="0.5" y="0.5" width="14" height="12" fill="#f4f4f4" stroke="#8a8a8a"/><rect x="0" y="0" width="15" height="2" fill="#8a8a8a"/><defs><linearGradient id="g1" x1="0" y1="0" x2="1" y2="1"><stop offset="0" stop-color="#4a7ab8"/><stop offset="1" stop-color="#3aa860"/></linearGradient></defs><rect x="2" y="2.5" width="6" height="8" fill="url(#g1)"/><rect x="12" y="2" width="1.5" height="4" fill="#3a8ac0"/><rect x="9" y="8.5" width="3" height="2" fill="#b0b0b0"/></svg>
<div class="t" style="left:465px;top:130.64px;font-size:12px;line-height:14px;letter-spacing:-0.2px;">Color Selector</div>
<svg class="a" style="left:730px;top:131px" width="13" height="13" viewBox="0 0 13 13"><path d="M1.3 1.3L11.2 11.2M11.2 1.3L1.3 11.2" stroke="#000" stroke-width="1"/></svg>
<div class="a" style="left:439px;top:168px;width:310px;height:167px;background:#fff;border:1px solid #d9d9d9"></div>
<svg class="a" style="left:436px;top:150px" width="200" height="22" viewBox="0 0 200 22"><path d="M60.5 19 L64.5 9.5 Q66.5 6.5 70 6.5 H101 Q103.5 6.5 105 9.5 L105.5 19Z" fill="#f0f0f0" stroke="#3c3c3c" stroke-width="1"/><path d="M107.5 19 L111.5 9.5 Q113.5 6.5 117 6.5 H159 Q161.5 6.5 163 9.5 L165.5 19Z" fill="#f0f0f0" stroke="#3c3c3c" stroke-width="1"/><path d="M3 18.5 H165.5" stroke="#d9d9d9" stroke-width="1"/><path d="M3.5 21 V19 L7.5 8.5 Q9.5 5.5 13 5.5 H52 Q54.5 5.5 56 8.5 L60.5 19 V21" fill="#fff" stroke="#3c3c3c" stroke-width="1"/><rect x="4" y="18" width="56" height="4" fill="#fff"/></svg>
<div class="t" style="left:450px;top:156.34px;font-size:12px;line-height:14px;letter-spacing:-0.5px;">Palette</div>
<div class="t" style="left:508.5px;top:156.84px;font-size:12px;line-height:14px;letter-spacing:-0.6px;">Web</div>
<div class="t" style="left:554.5px;top:156.84px;font-size:12px;line-height:14px;letter-spacing:-0.9px;">Custom</div>
<div class="a" style="left:453px;top:180px;width:282px;height:142px;background:#fff;border:1px solid #8c8c8c"></div>
<div class="a" style="left:454px;top:181px;width:20px;height:20px;background:#ffc0c0"></div>
<div class="a" style="left:474px;top:181px;width:20px;height:20px;background:#f0d0c0"></div>
<div class="a" style="left:494px;top:181px;width:20px;height:20px;background:#e0e0c0"></div>
<div class="a" style="left:514px;top:181px;width:20px;height:20px;background:#d0f0c0"></div>
<div class="a" style="left:534px;top:181px;width:20px;height:20px;background:#c0ffc0"></div>
<div class="a" style="left:554px;top:181px;width:20px;height:20px;background:#c0f0d0"></div>
<div class="a" style="left:574px;top:181px;width:20px;height:20px;background:#c0e0e0"></div>
<div class="a" style="left:594px;top:181px;width:20px;height:20px;background:#c0d0f0"></div>
<div class="a" style="left:614px;top:181px;width:20px;height:20px;background:#c0c0ff"></div>
<div class="a" style="left:634px;top:181px;width:20px;height:20px;background:#d0c0f0"></div>
<div class="a" style="left:654px;top:181px;width:20px;height:20px;background:#e0c0e0"></div>
<div class="a" style="left:674px;top:181px;width:20px;height:20px;background:#f0c0d0"></div>
<div class="a" style="left:694px;top:181px;width:20px;height:20px;background:#ffc0c0"></div>
<div class="a" style="left:714px;top:181px;width:20px;height:20px;background:#ffffff"></div>
<div class="a" style="left:454px;top:201px;width:20px;height:20px;background:#ff8080"></div>
<div class="a" style="left:474px;top:201px;width:20px;height:20px;background:#f0b080"></div>
<div class="a" style="left:494px;top:201px;width:20px;height:20px;background:#e0e080"></div>
<div class="a" style="left:514px;top:201px;width:20px;height:20px;background:#b0f080"></div>
<div class="a" style="left:534px;top:201px;width:20px;height:20px;background:#80ff80"></div>
<div class="a" style="left:554px;top:201px;width:20px;height:20px;background:#80f0b0"></div>
<div class="a" style="left:574px;top:201px;width:20px;height:20px;background:#80e8e8"></div>
<div class="a" style="left:594px;top:201px;width:20px;height:20px;background:#80b0f0"></div>
<div class="a" style="left:614px;top:201px;width:20px;height:20px;background:#8080ff"></div>
<div class="a" style="left:634px;top:201px;width:20px;height:20px;background:#b080f0"></div>
<div class="a" style="left:654px;top:201px;width:20px;height:20px;background:#e880e8"></div>
<div class="a" style="left:674px;top:201px;width:20px;height:20px;background:#f080b0"></div>
<div class="a" style="left:694px;top:201px;width:20px;height:20px;background:#ff8080"></div>
<div class="a" style="left:714px;top:201px;width:20px;height:20px;background:#d4d4d4"></div>
<div class="a" style="left:454px;top:221px;width:20px;height:20px;background:#ff4040"></div>
<div class="a" style="left:474px;top:221px;width:20px;height:20px;background:#f8a040"></div>
<div class="a" style="left:494px;top:221px;width:20px;height:20px;background:#f4f040"></div>
<div class="a" style="left:514px;top:221px;width:20px;height:20px;background:#a0f040"></div>
<div class="a" style="left:534px;top:221px;width:20px;height:20px;background:#40ff40"></div>
<div class="a" style="left:554px;top:221px;width:20px;height:20px;background:#40f4a0"></div>
<div class="a" style="left:574px;top:221px;width:20px;height:20px;background:#40f4f4"></div>
<div class="a" style="left:594px;top:221px;width:20px;height:20px;background:#4098ff"></div>
<div class="a" style="left:614px;top:221px;width:20px;height:20px;background:#4040ff"></div>
<div class="a" style="left:634px;top:221px;width:20px;height:20px;background:#a040f4"></div>
<div class="a" style="left:654px;top:221px;width:20px;height:20px;background:#f840f8"></div>
<div class="a" style="left:674px;top:221px;width:20px;height:20px;background:#f84098"></div>
<div class="a" style="left:694px;top:221px;width:20px;height:20px;background:#ff4040"></div>
<div class="a" style="left:714px;top:221px;width:20px;height:20px;background:#a8a8a8"></div>
<div class="a" style="left:454px;top:241px;width:20px;height:20px;background:#ff0000"></div>
<div class="a" style="left:474px;top:241px;width:20px;height:20px;background:#ff8000"></div>
<div class="a" style="left:494px;top:241px;width:20px;height:20px;background:#ffff00"></div>
<div class="a" style="left:514px;top:241px;width:20px;height:20px;background:#80ff00"></div>
<div class="a" style="left:534px;top:241px;width:20px;height:20px;background:#00ff00"></div>
<div class="a" style="left:554px;top:241px;width:20px;height:20px;background:#00ff80"></div>
<div class="a" style="left:574px;top:241px;width:20px;height:20px;background:#00ffff"></div>
<div class="a" style="left:594px;top:241px;width:20px;height:20px;background:#0080ff"></div>
<div class="a" style="left:614px;top:241px;width:20px;height:20px;background:#0000ff"></div>
<div class="a" style="left:634px;top:241px;width:20px;height:20px;background:#8000ff"></div>
<div class="a" style="left:654px;top:241px;width:20px;height:20px;background:#ff00ff"></div>
<div class="a" style="left:674px;top:241px;width:20px;height:20px;background:#ff0080"></div>
<div class="a" style="left:694px;top:241px;width:20px;height:20px;background:#ff0000"></div>
<div class="a" style="left:714px;top:241px;width:20px;height:20px;background:#808080"></div>
<div class="a" style="left:454px;top:261px;width:20px;height:20px;background:#c00000"></div>
<div class="a" style="left:474px;top:261px;width:20px;height:20px;background:#c06000"></div>
<div class="a" style="left:494px;top:261px;width:20px;height:20px;background:#c0c000"></div>
<div class="a" style="left:514px;top:261px;width:20px;height:20px;background:#60c000"></div>
<div class="a" style="left:534px;top:261px;width:20px;height:20px;background:#00c000"></div>
<div class="a" style="left:554px;top:261px;width:20px;height:20px;background:#00c060"></div>
<div class="a" style="left:574px;top:261px;width:20px;height:20px;background:#00c0c0"></div>
<div class="a" style="left:594px;top:261px;width:20px;height:20px;background:#0060c0"></div>
<div class="a" style="left:614px;top:261px;width:20px;height:20px;background:#0000c0"></div>
<div class="a" style="left:634px;top:261px;width:20px;height:20px;background:#6000c0"></div>
<div class="a" style="left:654px;top:261px;width:20px;height:20px;background:#c000c0"></div>
<div class="a" style="left:674px;top:261px;width:20px;height:20px;background:#c00060"></div>
<div class="a" style="left:694px;top:261px;width:20px;height:20px;background:#c00000"></div>
<div class="a" style="left:714px;top:261px;width:20px;height:20px;background:#585858"></div>
<div class="a" style="left:454px;top:281px;width:20px;height:20px;background:#800000"></div>
<div class="a" style="left:474px;top:281px;width:20px;height:20px;background:#804000"></div>
<div class="a" style="left:494px;top:281px;width:20px;height:20px;background:#808000"></div>
<div class="a" style="left:514px;top:281px;width:20px;height:20px;background:#408000"></div>
<div class="a" style="left:534px;top:281px;width:20px;height:20px;background:#008000"></div>
<div class="a" style="left:554px;top:281px;width:20px;height:20px;background:#008040"></div>
<div class="a" style="left:574px;top:281px;width:20px;height:20px;background:#008080"></div>
<div class="a" style="left:594px;top:281px;width:20px;height:20px;background:#004080"></div>
<div class="a" style="left:614px;top:281px;width:20px;height:20px;background:#000080"></div>
<div class="a" style="left:634px;top:281px;width:20px;height:20px;background:#400080"></div>
<div class="a" style="left:654px;top:281px;width:20px;height:20px;background:#800080"></div>
<div class="a" style="left:674px;top:281px;width:20px;height:20px;background:#800040"></div>
<div class="a" style="left:694px;top:281px;width:20px;height:20px;background:#800000"></div>
<div class="a" style="left:714px;top:281px;width:20px;height:20px;background:#2c2c2c"></div>
<div class="a" style="left:454px;top:301px;width:20px;height:20px;background:#400000"></div>
<div class="a" style="left:474px;top:301px;width:20px;height:20px;background:#402000"></div>
<div class="a" style="left:494px;top:301px;width:20px;height:20px;background:#404000"></div>
<div class="a" style="left:514px;top:301px;width:20px;height:20px;background:#204000"></div>
<div class="a" style="left:534px;top:301px;width:20px;height:20px;background:#004000"></div>
<div class="a" style="left:554px;top:301px;width:20px;height:20px;background:#004020"></div>
<div class="a" style="left:574px;top:301px;width:20px;height:20px;background:#004040"></div>
<div class="a" style="left:594px;top:301px;width:20px;height:20px;background:#002040"></div>
<div class="a" style="left:614px;top:301px;width:20px;height:20px;background:#000040"></div>
<div class="a" style="left:634px;top:301px;width:20px;height:20px;background:#200040"></div>
<div class="a" style="left:654px;top:301px;width:20px;height:20px;background:#400040"></div>
<div class="a" style="left:674px;top:301px;width:20px;height:20px;background:#400020"></div>
<div class="a" style="left:694px;top:301px;width:20px;height:20px;background:#400000"></div>
<div class="a" style="left:714px;top:301px;width:20px;height:20px;background:#000000"></div>
<div class="a" style="left:553px;top:180px;width:22px;height:22px;border:1px solid #f01818"></div>
<div class="a" style="left:464px;top:340px;width:101px;height:25px;background:#e1e1e1;border:1px solid #e81010;box-shadow:inset 0 0 0 2px #0078d7"></div>
<div class="t" style="left:414.0px;width:200px;text-align:center;top:346.52px;font-size:11.5px;line-height:13px;letter-spacing:-0.2px;">OK</div>
<div class="a" style="left:574px;top:340px;width:41px;height:25px;background:#000;border:1px solid #8a8a8a"></div>
<div class="a" style="left:625px;top:341px;width:99px;height:23px;background:#e1e1e1;border:1px solid #adadad"></div>
<div class="t" style="left:573.5px;width:200px;text-align:center;top:346.52px;font-size:11.5px;line-height:13px;letter-spacing:-0.2px;">Cancel</div>
</body></html>
